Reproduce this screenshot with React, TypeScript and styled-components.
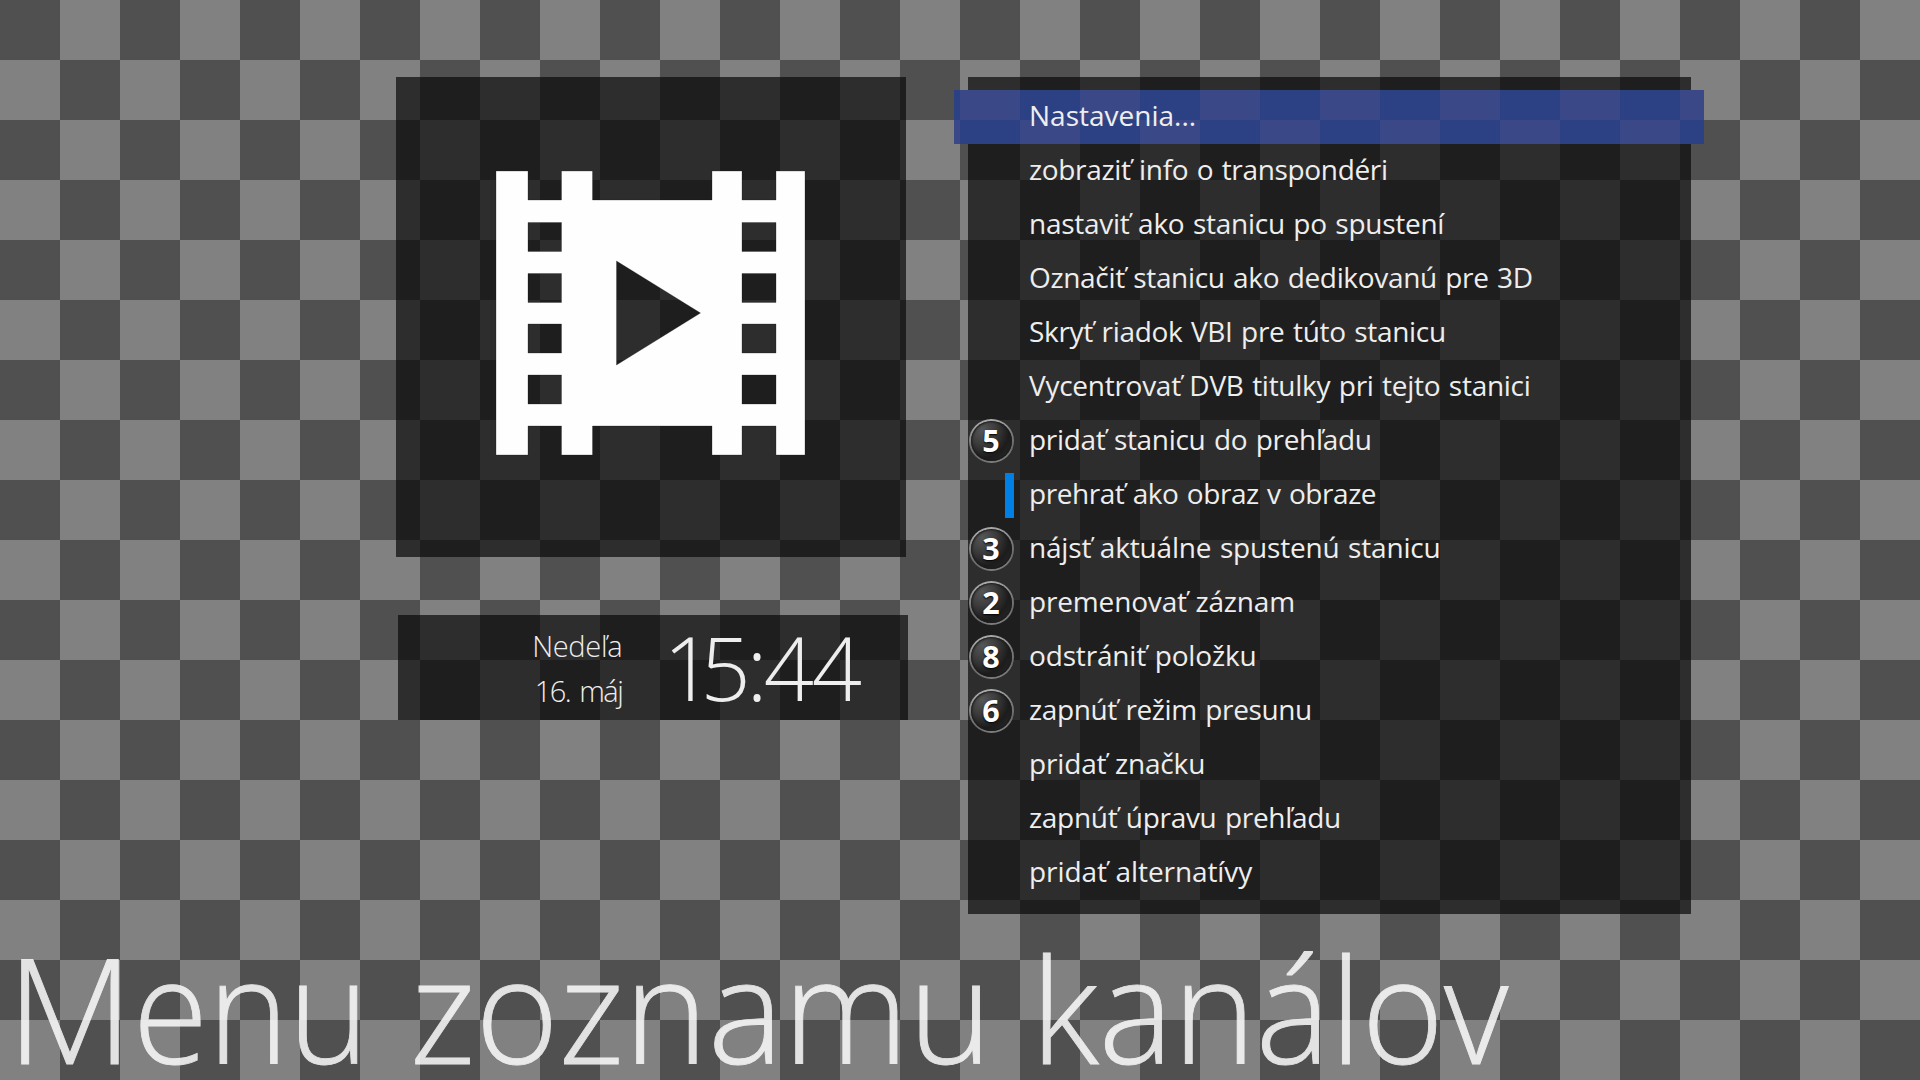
import React from "react";
import styled, { createGlobalStyle } from "styled-components";

const GlobalStyle = createGlobalStyle`
  * { box-sizing: border-box; }
  body { margin: 0; background: #505050; }
`;

const checker = (light: string, dark: string) =>
  `conic-gradient(${light} 25%, ${dark} 0 50%, ${light} 0 75%, ${dark} 0) 0 0 / 120px 120px fixed`;

const Screen = styled.main`
  width: 1920px;
  height: 1080px;
  overflow: hidden;
  display: flex;
  flex-direction: column;
  justify-content: space-between;
  background: ${checker("#818181", "#505050")};
  font-family: "Open Sans", "Noto Sans", sans-serif;
  color: #eeeeee;
`;

const Content = styled.div`
  display: flex;
  align-items: flex-start;
  padding: 77px 216px 0 396px;
`;

const Side = styled.section`
  width: 558px;
  display: flex;
  flex-direction: column;
  gap: 58px;
`;

const Preview = styled.div`
  width: 510px;
  height: 480px;
  padding: 94px 0 0 99px;
  background: rgba(8, 8, 8, 0.694);
`;

const Film = styled.svg`
  display: block;
  width: 312px;
  height: 286px;
`;

const ClockPanel = styled.div`
  width: 510px;
  height: 105px;
  margin-left: 2px;
  display: flex;
  justify-content: flex-end;
  padding-right: 46px;
  background: rgba(8, 8, 8, 0.694);
  font-weight: 300;
`;

const DateLines = styled.div`
  display: flex;
  flex-direction: column;
  align-items: flex-end;
  padding-top: 8px;
  margin-right: 41px;
  font-size: 29px;
  line-height: 45px;
`;

const DateLine = styled.span<{ $tracking: number }>`
  letter-spacing: ${(p) => p.$tracking}px;
  word-spacing: ${(p) => (p.$tracking < -1 ? "3px" : "0")};
`;

const Time = styled.div`
  font-size: 88px;
  line-height: 105px;
  white-space: nowrap;
`;

const Digit = styled.span<{ $tracking: number }>`
  letter-spacing: ${(p) => p.$tracking}px;
`;

const Menu = styled.nav`
  width: 723px;
  height: 837px;
  margin-left: 14px;
  padding-top: 13px;
  background: linear-gradient(rgba(8, 8, 8, 0.694) 0 13px, transparent 0 67px, rgba(8, 8, 8, 0.694) 0);
`;

const Row = styled.div<{ $selected?: boolean }>`
  height: 54px;
  margin: ${(p) => (p.$selected ? "0 -13px 0 -14px" : "0")};
  padding-left: ${(p) => (p.$selected ? "14px" : "0")};
  background: ${(p) => (p.$selected ? checker("#3a4887", "#2c4084") : "none")};
  display: flex;
  align-items: flex-start;
`;

const Slot = styled.div`
  width: 61px;
  height: 54px;
  flex: none;
  display: flex;
  align-items: center;
`;

const Badge = styled.span`
  width: 45px;
  height: 44px;
  margin-left: 1px;
  padding: 0 1px 2px 0;
  display: flex;
  align-items: center;
  justify-content: center;
  border-radius: 50%;
  border: 2px solid transparent;
  background:
    radial-gradient(ellipse at 28% 22%, #565656, #3d3d3d 32%, #1c1c1c 64%, #303030) padding-box,
    linear-gradient(165deg, #b8b8b8, #7c7c7c 45%, #6a6a6a 70%, #888) border-box;
  box-shadow: inset 0 0 2px 1px #1a1a1a;
  font: 700 30.5px/40px "Open Sans", sans-serif;
  text-shadow: 0 1px 2px #000;
  color: #fff;
`;

const Marker = styled.span`
  width: 9px;
  height: 45px;
  margin: 1px 0 0 37px;
  background: #0080e4;
`;

const Label = styled.span<{ $tracking: number }>`
  font-size: 28px;
  line-height: 50px;
  letter-spacing: ${(p) => p.$tracking}px;
  word-spacing: 1.5px;
  white-space: pre;
`;

const Title = styled.h1`
  margin: 0;
  padding-left: 7px;
  height: 144px;
  font: 300 146px/144px "Open Sans", sans-serif;
  white-space: nowrap;
  color: #fff;
  -webkit-text-stroke: 0.9px #fff;
  opacity: 0.84;
`;

const Condensed = styled.span<{ $scale: number; $pull: number }>`
  display: inline-block;
  transform: scaleX(${(p) => p.$scale});
  transform-origin: left;
  margin-right: ${(p) => p.$pull}px;
`;

type Item = { label: string; tracking: number; num?: string; marker?: boolean };

const items: Item[] = [
  { label: "Nastavenia...", tracking: 0 },
  { label: "zobraziť info o transpondéri", tracking: -0.33 },
  { label: "nastaviť ako stanicu po spustení", tracking: -0.26 },
  { label: "Označiť stanicu ako dedikovanú pre 3D", tracking: -0.33 },
  { label: "Skryť riadok VBI pre túto stanicu", tracking: -0.3 },
  { label: "Vycentrovať DVB titulky pri tejto stanici", tracking: -0.27 },
  { label: "pridať stanicu do prehľadu", tracking: -0.31, num: "5" },
  { label: "prehrať ako obraz v obraze", tracking: -0.44, marker: true },
  { label: "nájsť aktuálne spustenú stanicu", tracking: -0.18, num: "3" },
  { label: "premenovať záznam", tracking: -0.16, num: "2" },
  { label: "odstrániť položku", tracking: -0.16, num: "8" },
  { label: "zapnúť režim presunu", tracking: -0.36, num: "6" },
  { label: "pridať značku", tracking: -0.16 },
  { label: "zapnúť úpravu prehľadu", tracking: -0.3 },
  { label: "pridať alternatívy", tracking: -0.08 },
];

const holes = [51.5, 102.5, 153, 204]
  .map((y) => `M33 ${y}h33.5v29h-33.5zM247 ${y}h34v29h-34z`)
  .join("");

export default function App() {
  return (
    <>
      <GlobalStyle />
      <Screen>
        <Content>
          <Side>
            <Preview>
              <Film viewBox="0 0 312 286">
                <path
                  fill="#fefefe"
                  fillRule="evenodd"
                  stroke="#1a1a1a"
                  strokeOpacity="0.35"
                  strokeWidth="0.8"
                  d={`M1 0H33V29H66.500V0H97.500V29H217V0H247V29H281V0H310V284H281V255H247V284H217V255H97.500V284H66.500V255H33V284H1Z${holes}M121.500 90V194L205.500 142Z`}
                />
              </Film>
            </Preview>
            <ClockPanel>
              <DateLines>
                <DateLine $tracking={-0.3}>Nedeľa</DateLine>
                <DateLine $tracking={-1.5}>16. máj</DateLine>
              </DateLines>
              <Time>
                <Digit $tracking={-13}>1</Digit>
                <Digit $tracking={-4.2}>5</Digit>
                <Digit $tracking={-3.7}>:</Digit>
                <Digit $tracking={-2.3}>4</Digit>
                <Digit $tracking={0}>4</Digit>
              </Time>
            </ClockPanel>
          </Side>
          <Menu>
            {items.map((it, i) => (
              <Row key={it.label} $selected={i === 0}>
                <Slot>
                  {it.num && <Badge>{it.num}</Badge>}
                  {it.marker && <Marker />}
                </Slot>
                <Label $tracking={it.tracking}>{it.label}</Label>
              </Row>
            ))}
          </Menu>
        </Content>
        <Title>
          M<Condensed $scale={0.935} $pull={-14}>enu</Condensed>{" "}
          <Condensed $scale={0.972} $pull={-16}>zoznamu</Condensed>{" "}
          <Condensed $scale={0.96} $pull={0}>kanálov</Condensed>
        </Title>
      </Screen>
    </>
  );
}
